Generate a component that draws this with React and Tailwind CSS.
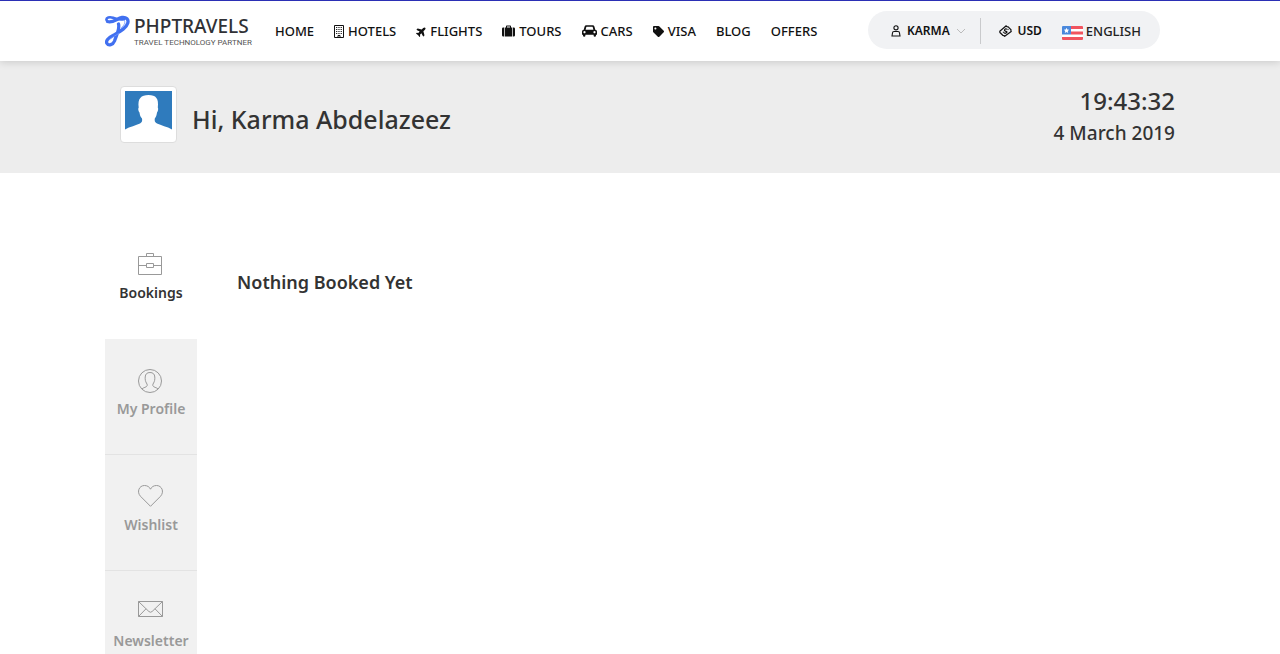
import React from "react";
import { FaPlane, FaTag } from "react-icons/fa";

function Logo() {
  return (
    <a href="#home" aria-label="PHPTRAVELS Travel Technology Partner" className="flex w-[146px] shrink-0 items-center gap-[3px]">
      <svg viewBox="0 0 26 32" className="h-8 w-[26px] shrink-0" fill="none" stroke="#4170f0" strokeLinecap="round" strokeLinejoin="round" aria-hidden="true">
        <path d="M1.500 5C1 2.500 4.500 1.500 8 2.800C12 4.500 15 5 19 4.200" strokeWidth="2.600" />
        <path d="M2.500 6.500C8 8.500 12 3.200 17 2.500C21.500 2 23.800 4.500 22.800 8C21 14 14 17 8 20.500C3 23 .5 26 2 28.500C3.500 31 8 30 9.500 26C11.500 20 15 14 13.500 9" strokeWidth="3.300" />
        <path d="M19.500 5.500C20.500 8 19 10.500 16.500 12.500M4.500 24.500C7 22 10.500 21 13.500 18.500" stroke="#7398ff" strokeWidth=".8" />
      </svg>
      <span className="flex flex-col gap-px whitespace-nowrap font-['Noto_Sans',sans-serif] text-[#303136]">
        <span className="text-[19px] font-medium leading-[22px]">PHPTRAVELS</span>
        <span className="font-['Roboto',sans-serif] text-[8px] leading-[9px] text-[#555]">TRAVEL TECHNOLOGY PARTNER</span>
      </span>
    </a>
  );
}

function HotelIcon() {
  return (
    <svg viewBox="0 0 10 13" className="h-[13px] w-[10px]" fill="none" stroke="currentColor" aria-hidden="true">
      <path d="M.5.5h9v12H.500z" />
      <path d="M2 2.500h6M2 4.500h6M2 6.500h6M2 8.500h6" strokeDasharray="1 .7" strokeWidth=".9" />
      <path d="M4 12V10.500h2V12" />
    </svg>
  );
}

function SuitcaseIcon() {
  return (
    <svg viewBox="0 0 13 12" className="h-3 w-[13px]" fill="currentColor" aria-hidden="true">
      <path d="M2 2.500v9h-.7Q0 11.500 0 10.200V3.800Q0 2.500 1.300 2.500zM11 2.500h.7q1.300 0 1.300 1.300v6.400q0 1.300-1.300 1.300H11z" />
      <path fillRule="evenodd" d="M2.700 2.500H4V1.200Q4 .5 4.700.5h3.600Q9 .5 9 1.200v1.300h1.300v9H2.700zM5 2.500h3v-1H5z" />
    </svg>
  );
}

function CarIcon() {
  return (
    <svg viewBox="0 0 15 12" className="h-3 w-[15px]" fill="currentColor" aria-hidden="true">
      <path fillRule="evenodd" d="M1.700 4.700 2.600 1.600Q3 .3 4.300.3h6.400Q12 .3 12.400 1.600l.9 3.100Q15 4.900 15 6.500v3q0 .3-.3.300H14v.7q0 1.200-1.200 1.200t-1.200-1.200v-.7H3.400v.7q0 1.200-1.200 1.200T1 10.500v-.7H.3Q0 9.800 0 9.500v-3Q0 4.900 1.700 4.700zM3.600 4.700h7.800L10.700 2q-.1-.3-.4-.3H4.700q-.3 0-.4.3zM2.500 6a1.100 1.100 0 1 0 .001 0zM12.500 6a1.100 1.100 0 1 0 .001 0z" />
    </svg>
  );
}

function PersonIcon() {
  return (
    <svg viewBox="0 0 10 12" className="h-3 w-[10px]" fill="none" stroke="currentColor" strokeWidth="1.100" aria-hidden="true">
      <circle cx="5" cy="2.800" r="2.100" />
      <path d="M3 6.500h4Q8.500 6.500 8.500 8l.5 3H1l.5-3Q1.500 6.500 3 6.500z" />
    </svg>
  );
}

function MoneyIcon() {
  return (
    <svg viewBox="0 0 13 12" className="h-3 w-[13px]" fill="none" stroke="currentColor" strokeWidth="1.200" strokeLinejoin="round" aria-hidden="true">
      <path d="M.8 6.200 7.200.8q.8 1.200 2 1.100l2.900 3q-.4 1 .1 1.600L5.700 11.300q-.7-1.100-1.900-1L.9 7.500z" />
      <path d="M8 4.200Q6.500 3.300 5.700 4.500T7 6.400t-.3 1.700Q5.800 8.600 5 7.700M4 7.500l.7-.6M8.600 4.800l.8-.6" />
    </svg>
  );
}

function Flag() {
  return (
    <svg viewBox="0 0 21 14" className="mt-[2px] h-[14px] w-[21px]" aria-hidden="true">
      <clipPath id="flag-edge"><rect width="21" height="14" rx="1" /></clipPath>
      <g clipPath="url(#flag-edge)">
        <path fill="#fff" d="M0 0h21v14H0z" />
        <path fill="#f1545f" d="M9 0h12v3H9zM9 5.500h12v3H9zM0 11h21v3H0z" />
        <path fill="#4b89dc" d="M0 0h9v8.500H0z" />
        <path fill="#fff" d="m4.500 1.800.8 1.700 1.900.2-1.400 1.300.4 1.900-1.700-1-1.700 1 .4-1.900-1.400-1.300 1.900-.2z" />
      </g>
    </svg>
  );
}

function BriefcaseIcon() {
  return (
    <svg viewBox="0 0 26 24" className="h-6 w-[26px]" fill="none" stroke="currentColor" aria-hidden="true">
      <path d="M.5 3.500h23v18H.500zM8.500 3.500v-3h7v3M.5 12.500h8M15.500 12.500h8M8.500 10.500h7v4h-7z" />
    </svg>
  );
}

function ProfileIcon() {
  return (
    <svg viewBox="0 0 26 24" className="h-6 w-[26px]" fill="none" stroke="currentColor" aria-hidden="true">
      <circle cx="12" cy="12" r="11.500" />
      <path d="M4 20c1-1.500 5-1.700 5.200-3.500.1-1-.2-1.800-.8-2.500C7.500 12.500 7 10.500 7.200 8 7.400 5 9 3.500 12 3.500S16.600 5 16.800 8c.2 2.500-.3 4.500-1.200 6-.6.7-.9 1.500-.8 2.500.2 1.800 4.200 2 5.200 3.500" />
    </svg>
  );
}

function HeartIcon() {
  return (
    <svg viewBox="0 0 26 24" className="h-6 w-[26px]" fill="none" stroke="currentColor" aria-hidden="true">
      <path d="M12.500 21.300 2.500 11.300C-1.500 7 1 .5 6.500.5c2.800 0 5 1.400 6 3.700 1-2.300 3.200-3.700 6-3.700 5.500 0 8 6.500 4 10.800z" />
    </svg>
  );
}

function MailIcon() {
  return (
    <svg viewBox="0 0 26 24" className="h-6 w-[26px]" fill="none" stroke="currentColor" aria-hidden="true">
      <path d="M.5.5h24v15H.500zM.5.5l10.400 10q1.600 1.500 3.200 0l10.400-10M.5 15.500l7.500-7.700M24.500 15.500l-7.500-7.700" />
    </svg>
  );
}

const navItems = [
  { label: "HOME" },
  { label: "HOTELS", icon: <HotelIcon />, gap: "gap-1" },
  { label: "FLIGHTS", icon: <FaPlane className="size-[11px] -rotate-45" />, gap: "gap-[3px]" },
  { label: "TOURS", icon: <SuitcaseIcon />, gap: "gap-1" },
  { label: "CARS", icon: <CarIcon />, gap: "gap-1" },
  { label: "VISA", icon: <FaTag className="size-[11px]" />, gap: "gap-1" },
  { label: "BLOG" },
  { label: "OFFERS" },
];

const accountItems = [
  { label: "Bookings", icon: <BriefcaseIcon />, active: true },
  { label: "My Profile", icon: <ProfileIcon /> },
  { label: "Wishlist", icon: <HeartIcon /> },
  { label: "Newsletter", icon: <MailIcon /> },
];

function Header() {
  return (
    <header className="relative border-t border-[#2b2fb5] bg-white shadow-[0_1px_8px_rgba(0,0,0,0.16)]">
      <div className="mx-auto flex h-[60px] max-w-[1100px] items-center px-[15px]">
        <Logo />
        <nav aria-label="Main" className="ml-6 flex items-center gap-5 whitespace-nowrap text-[13px] font-medium leading-5 text-[#111]">
          {navItems.map((item) => (
            <a key={item.label} href={"#" + item.label.toLowerCase()} className={"flex items-center " + (item.gap || "")}>
              {item.icon}
              {item.label}
            </a>
          ))}
        </nav>
        <div className="mb-[2px] ml-auto mr-[15px] flex h-[38px] w-[292px] shrink-0 items-center rounded-full bg-[#f1f2f4] pt-[2px] text-[12px] font-semibold text-[#111]">
          <button type="button" className="ml-[23px] flex items-center gap-[6px]">
            <PersonIcon />
            KARMA
            <svg viewBox="0 0 10 6" className="h-[6px] w-[10px]" fill="none" stroke="#bbb" aria-hidden="true"><path d="m1 1 4 4 4-4" /></svg>
          </button>
          <span className="ml-auto h-[26px] w-px bg-[#c9cacc]" />
          <button type="button" className="ml-[18px] flex items-center gap-[5px]">
            <MoneyIcon />
            USD
          </button>
          <button type="button" className="ml-5 mr-[19px] flex items-center gap-[3px] pt-[2px] text-[13px] font-medium text-[#222]">
            <Flag />
            ENGLISH
          </button>
        </div>
      </div>
    </header>
  );
}

export default function App() {
  return (
    <div className="h-screen overflow-hidden bg-white font-['Noto_Sans',sans-serif] text-[#333]">
      <Header />
      <section className="bg-[#ededed]">
        <div className="mx-auto flex h-28 max-w-[1100px] items-start px-[15px] pt-6">
          <div className="ml-[15px] mt-px size-[57px] rounded-[4px] border border-[#ddd] bg-white p-1">
            <svg viewBox="0 0 47 47" className="size-[47px]" role="img" aria-label="Profile picture">
              <path fill="#2f7bbd" d="M0 0h47v38.500C42 35.500 36 34.500 32 32.500c-2.200-1-2.600-3-2.200-5 1.200-1.500 1.900-3.500 2.200-6 1.200-1.500 1.500-4 .8-5C34 7.500 31 4 23.500 4S12.500 7.500 13.700 16.500c-.8 1-.5 3.500.8 5 .3 2.500 1 4.500 2.500 6 .5 2 0 4-2 5C11 34.500 5 35.500 0 38.500z" />
            </svg>
          </div>
          <h1 className="ml-[15px] mt-4 text-[25px] font-medium leading-9">Hi, Karma Abdelazeez</h1>
          <div className="ml-auto text-right font-medium">
            <p className="text-[24px] leading-[32px]">19:43:32</p>
            <p className="text-[19px] leading-[32px]">4 March 2019</p>
          </div>
        </div>
      </section>
      <main className="mx-auto flex max-w-[1100px] px-[15px] pt-[50px]">
        <nav aria-label="Account" className="w-[92px] shrink-0">
          {accountItems.map((item) => (
            <a
              key={item.label}
              href={"#" + item.label.toLowerCase().replace(" ", "-")}
              aria-current={item.active ? "page" : undefined}
              className={
                "flex h-[116px] flex-col items-center gap-[6px] whitespace-nowrap pt-[30px] text-[14px] font-semibold leading-5 " +
                (item.active ? "text-[#333]" : "border-b border-[#e3e3e3] bg-[#f1f1f1] text-[#999]")
              }
            >
              <span className="text-[#999]">{item.icon}</span>
              {item.label}
            </a>
          ))}
        </nav>
        <h2 className="ml-10 mt-[45px] text-[18px] font-semibold leading-7">Nothing Booked Yet</h2>
      </main>
    </div>
  );
}
